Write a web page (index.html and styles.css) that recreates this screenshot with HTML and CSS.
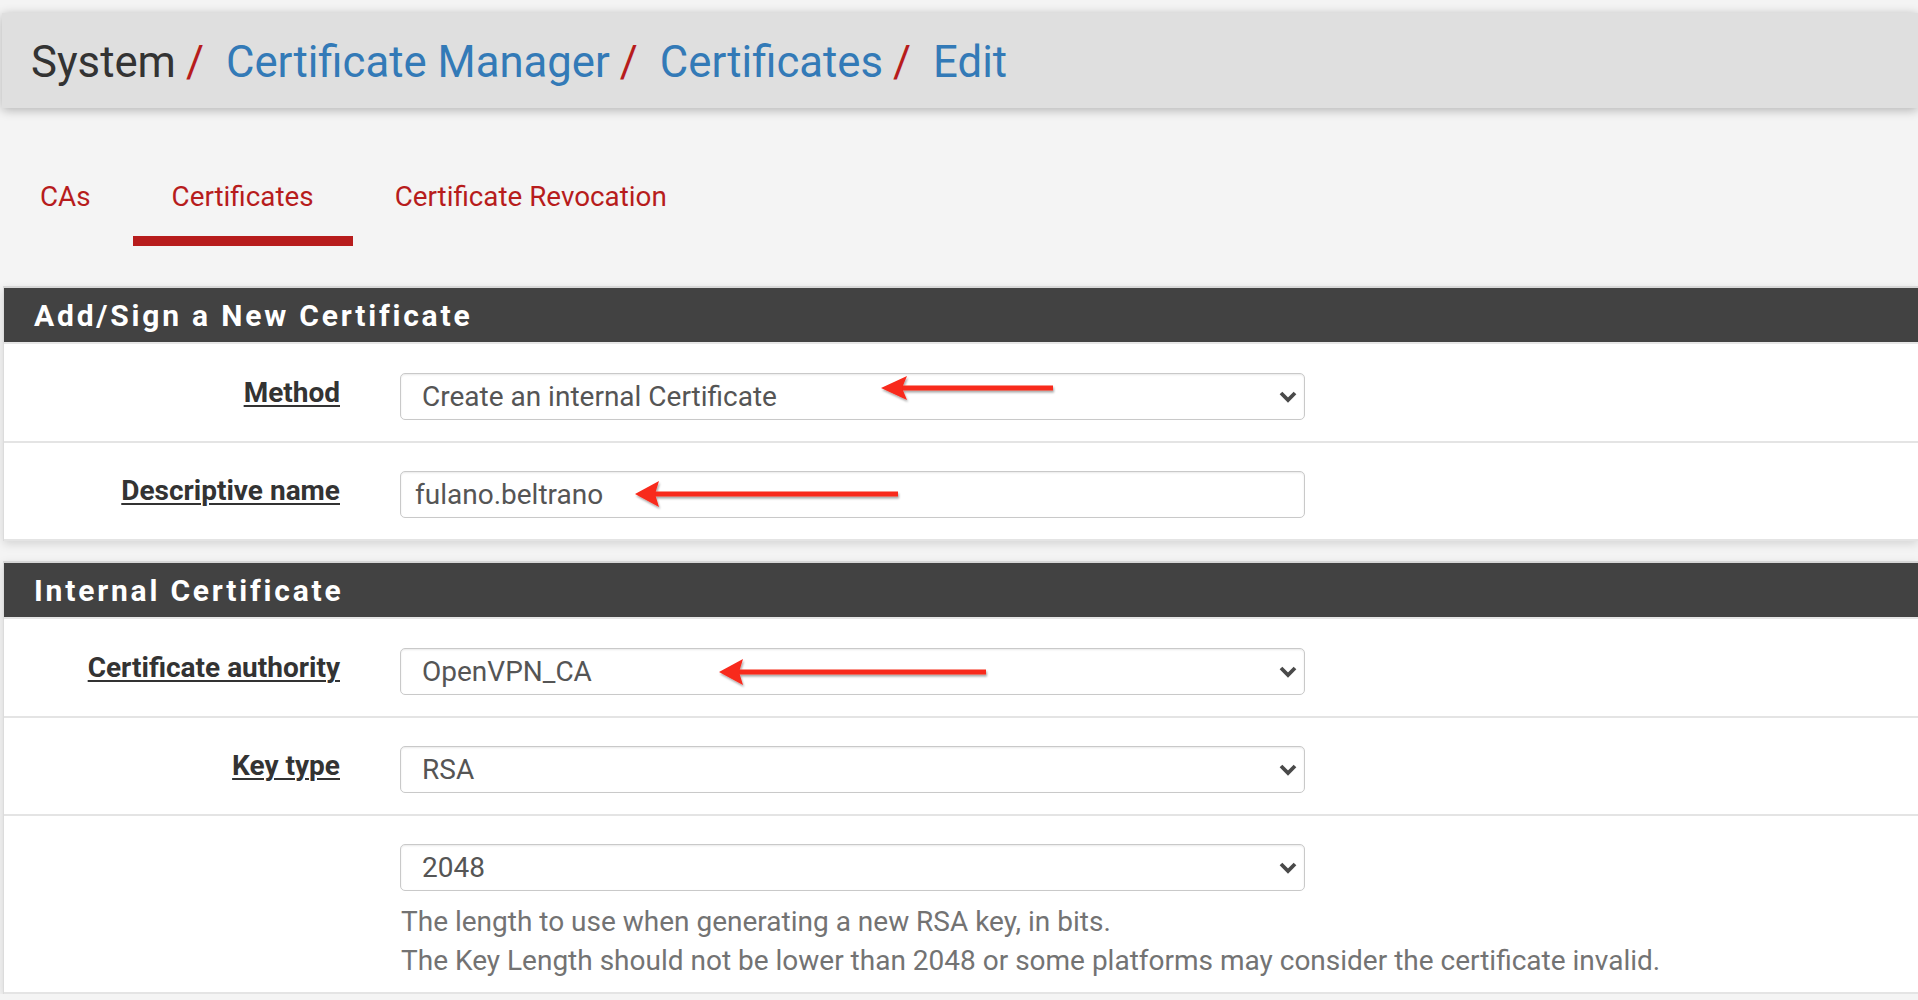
FILE: index.html
```html
<!DOCTYPE html>
<html lang="en">
<head>
<meta charset="utf-8">
<title>System / Certificate Manager / Certificates / Edit</title>
<link rel="stylesheet" href="styles.css">
</head>
<body>
<div class="page">
  <header class="topbar">
    <ol class="crumbs">
      <li class="crumb">System</li>
      <li class="crumb"><a href="#">Certificate Manager</a></li>
      <li class="crumb"><a href="#">Certificates</a></li>
      <li class="crumb"><a href="#">Edit</a></li>
    </ol>
  </header>

  <nav class="tabs">
    <a class="tab" href="#">CAs</a>
    <a class="tab active" href="#">Certificates</a>
    <a class="tab" href="#">Certificate Revocation</a>
  </nav>

  <section class="panel">
    <h2 class="panel-heading">Add/Sign a New Certificate</h2>
    <div class="panel-body">
      <div class="row">
        <label class="row-label"><span>Method</span></label>
        <div class="control">
          <div class="select-wrap">
            <select class="field select"><option>Create an internal Certificate</option></select>
            <svg class="chevron" width="18" height="12" viewBox="0 0 18 12"><polyline points="2,2 9,9 16,2" fill="none" stroke="#4a4a4a" stroke-width="3.8"/></svg>
          </div>
          <svg class="note-arrow arrow-method" width="180" height="30" viewBox="0 0 180 30">
            <defs><filter id="sh1" x="-10%" y="-40%" width="120%" height="180%"><feDropShadow dx="1" dy="2" stdDeviation="1.2" flood-color="#000" flood-opacity="0.35"/></filter></defs>
            <g filter="url(#sh1)" fill="#f8291b">
              <rect x="20" y="12.5" width="153" height="5"/>
              <polygon points="1,15 27,3 22,15 27,27"/>
            </g>
          </svg>
        </div>
      </div>
      <div class="row">
        <label class="row-label"><span>Descriptive name</span></label>
        <div class="control">
          <input class="field input" type="text" value="fulano.beltrano">
          <svg class="note-arrow arrow-name" width="270" height="30" viewBox="0 0 270 30">
            <defs><filter id="sh2" x="-10%" y="-40%" width="120%" height="180%"><feDropShadow dx="1" dy="2" stdDeviation="1.2" flood-color="#000" flood-opacity="0.35"/></filter></defs>
            <g filter="url(#sh2)" fill="#f8291b">
              <rect x="20" y="12.5" width="244" height="5"/>
              <polygon points="1,15 25,2 21,15 25,28"/>
            </g>
          </svg>
        </div>
      </div>
    </div>
  </section>

  <section class="panel">
    <h2 class="panel-heading">Internal Certificate</h2>
    <div class="panel-body">
      <div class="row">
        <label class="row-label"><span>Certificate authority</span></label>
        <div class="control">
          <div class="select-wrap">
            <select class="field select"><option>OpenVPN_CA</option></select>
            <svg class="chevron" width="18" height="12" viewBox="0 0 18 12"><polyline points="2,2 9,9 16,2" fill="none" stroke="#4a4a4a" stroke-width="3.8"/></svg>
          </div>
          <svg class="note-arrow arrow-ca" width="275" height="30" viewBox="0 0 275 30">
            <defs><filter id="sh3" x="-10%" y="-40%" width="120%" height="180%"><feDropShadow dx="1" dy="2" stdDeviation="1.2" flood-color="#000" flood-opacity="0.35"/></filter></defs>
            <g filter="url(#sh3)" fill="#f8291b">
              <rect x="20" y="12.5" width="248" height="5"/>
              <polygon points="1,15 25,2 21,15 25,28"/>
            </g>
          </svg>
        </div>
      </div>
      <div class="row">
        <label class="row-label"><span>Key type</span></label>
        <div class="control">
          <div class="select-wrap">
            <select class="field select"><option>RSA</option></select>
            <svg class="chevron" width="18" height="12" viewBox="0 0 18 12"><polyline points="2,2 9,9 16,2" fill="none" stroke="#4a4a4a" stroke-width="3.8"/></svg>
          </div>
        </div>
      </div>
      <div class="row row-help">
        <div class="row-label"></div>
        <div class="control">
          <div class="select-wrap">
            <select class="field select"><option>2048</option></select>
            <svg class="chevron" width="18" height="12" viewBox="0 0 18 12"><polyline points="2,2 9,9 16,2" fill="none" stroke="#4a4a4a" stroke-width="3.8"/></svg>
          </div>
          <p class="help">The length to use when generating a new RSA key, in bits.<br>The Key Length should not be lower than 2048 or some platforms may consider the certificate invalid.</p>
        </div>
      </div>
    </div>
  </section>
</div>
</body>
</html>
```
FILE: styles.css
```css
* {
  box-sizing: border-box;
}

html, body {
  margin: 0;
  padding: 0;
}

body {
  background: #f4f4f4;
  font-family: Roboto, "Liberation Sans", Arial, sans-serif;
  color: #333;
  overflow: hidden;
}

.page {
  padding-top: 13px;
}

/* ---------- breadcrumb bar ---------- */
.topbar {
  height: 95px;
  margin-left: 2px;
  background: #dfdfdf;
  box-shadow: 0 2px 10px rgba(0, 0, 0, 0.28);
  padding: 23px 0 0 29px;
  position: relative;
  z-index: 2;
}

.crumbs {
  list-style: none;
  margin: 0;
  padding: 0;
  display: flex;
  font-size: 43.7px;
  line-height: 52px;
}

.crumb {
  color: #333;
  white-space: nowrap;
}

.crumb + .crumb::before {
  content: "/";
  color: #b71c1c;
  padding: 0 22px 0 10px;
}

.crumb a {
  color: #337ab7;
  text-decoration: none;
}

/* ---------- tabs ---------- */
.tabs {
  display: flex;
  gap: 3px;
  padding-left: 1px;
}

.tab {
  font-size: 27.8px;
  line-height: 33px;
  color: #b71c1c;
  text-decoration: none;
  padding: 72px 39px 23px;
  border-bottom: 10px solid transparent;
  white-space: nowrap;
}

.tab.active {
  border-bottom-color: #b71c1c;
}

/* ---------- panels ---------- */
.panel {
  margin: 40px 0 0 3px;
  background: #fff;
  border-top: 2px solid #d6d6d6;
  border-left: 1px solid #dcdcdc;
  box-shadow: 0 3px 9px rgba(0, 0, 0, 0.13);
}

.panel + .panel {
  margin-top: 20px;
}

.panel-heading {
  margin: 0;
  height: 56px;
  padding: 1px 0 0 30px;
  background: #424242;
  color: #fff;
  font-size: 30px;
  font-weight: 700;
  line-height: 53px;
  letter-spacing: 2.8px;
  border-bottom: 2px solid #e6e6e6;
}

.row {
  position: relative;
  display: grid;
  grid-template-columns: 336px 905px;
  column-gap: 60px;
  padding: 28px 0 21px;
  border-bottom: 2px solid #e4e4e4;
}

.panel-body .row:first-child {
  padding-top: 29px;
}

.row-help {
  padding-bottom: 12px;
}

.row-label {
  text-align: right;
  font-size: 28px;
  font-weight: 700;
  line-height: 34px;
  padding-top: 3px;
  color: #333;
}

.row-label span {
  text-decoration: underline;
  text-decoration-thickness: 2px;
  text-underline-offset: 3px;
}

.control {
  position: relative;
}

.select-wrap {
  position: relative;
}

.field {
  display: block;
  width: 100%;
  height: 47px;
  margin: 0;
  border: 1px solid #c9c9c9;
  border-radius: 5px;
  background: #fff;
  box-shadow: inset 0 1px 2px rgba(0, 0, 0, 0.09);
  font-family: Roboto, "Liberation Sans", Arial, sans-serif;
  font-size: 28px;
  color: #555;
  outline: none;
}

.select {
  -webkit-appearance: none;
  appearance: none;
  padding: 0 44px 0 21px;
}

.input {
  padding: 0 14px;
}

.chevron {
  position: absolute;
  right: 8px;
  top: 18px;
  pointer-events: none;
}

.help {
  margin: 11px 0 0;
  padding-left: 1px;
  font-size: 28px;
  line-height: 39px;
  color: #737373;
  white-space: nowrap;
}

/* ---------- annotation arrows (overlay) ---------- */
.note-arrow {
  position: absolute;
  overflow: visible;
  pointer-events: none;
}

.arrow-method {
  left: 480px;
  top: 0;
}

.arrow-name {
  left: 234px;
  top: 8px;
}

.arrow-ca {
  left: 318px;
  top: 9px;
}
```
